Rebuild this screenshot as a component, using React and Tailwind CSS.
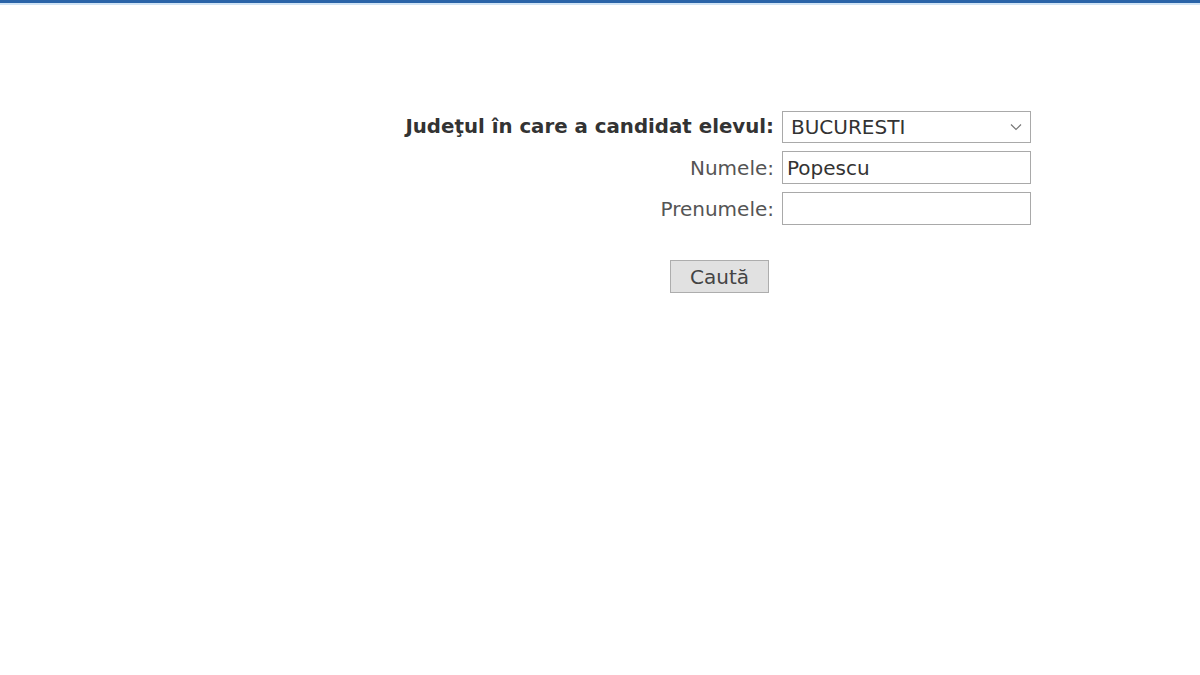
export default function App() {
  return (
    <div className="min-h-[675px] w-[1200px] bg-white font-['DejaVu_Sans',Verdana,sans-serif] text-[#333]">
      <div className="h-[3px] bg-[#2a64a8]"></div>
      <div className="h-[2px] bg-[#cfe3f5]"></div>

      <div className="ml-[400px] mt-[106px] w-[631px]">
        <div className="grid grid-cols-[auto_249px] items-center gap-x-[8px] gap-y-[8px] leading-none">
          <label className="text-right text-[19.8px] font-bold text-[#333]">Judeţul în care a candidat elevul:</label>
          <div className="relative flex h-[32px] items-center border border-[#a9a9a9] bg-white pl-[8px]">
            <span className="text-[20px] text-[#333]">BUCURESTI</span>
            <svg className="absolute right-[8px] top-[11px]" width="12" height="8" viewBox="0 0 12 8" fill="none">
              <path d="M1 1.5 6 6.5 11 1.5" stroke="#777" strokeWidth="1.2" />
            </svg>
          </div>

          <label className="text-right text-[20px] text-[#555]">Numele:</label>
          <div className="flex h-[33px] items-center border border-[#a9a9a9] bg-white pl-[4px]">
            <span className="text-[20px] text-[#333]">Popescu</span>
          </div>

          <label className="text-right text-[20px] text-[#555]">Prenumele:</label>
          <div className="h-[33px] border border-[#a9a9a9] bg-white"></div>
        </div>

        <div className="mt-[35px] ml-[270px]">
          <button className="h-[33px] w-[99px] border border-[#adadad] bg-[#e1e1e1] text-[20px] leading-none text-[#444]">Caută</button>
        </div>
      </div>
    </div>
  );
}
